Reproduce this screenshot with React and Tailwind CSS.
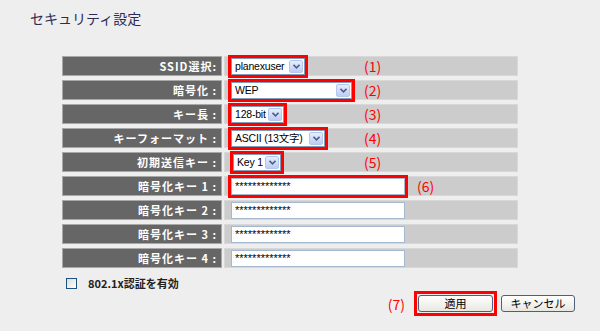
import React from 'react'

const jp = { fontFamily: '"Noto Sans CJK JP", "Liberation Sans", sans-serif' }
const ar = { fontFamily: '"Liberation Sans", "Noto Sans CJK JP", sans-serif' }

function Chevron() {
  return (
    <svg width="7" height="5" viewBox="0 0 7 5">
      <path d="M0.5 0.8 L3.5 3.8 L6.5 0.8" fill="none" stroke="#4d6185" strokeWidth="1.6" />
    </svg>
  )
}

function Select({ text, width }) {
  return (
    <div
      className="flex h-[17px] items-center border border-[#7f9db9] bg-white outline-[3px] outline-[#ff0000] outline-solid"
      style={{ width }}
    >
      <span className="flex-1 pl-[3px] text-[10.5px] leading-none tracking-[-0.2px] text-black whitespace-nowrap" style={ar}>
        {text}
      </span>
      <span className="mr-px flex h-[13px] w-[14px] shrink-0 items-center justify-center rounded-[2px] border border-[#b5c7ef] bg-gradient-to-b from-[#e6edfd] to-[#bccdf5]">
        <Chevron />
      </span>
    </div>
  )
}

function Input({ red }) {
  return (
    <div
      className={`flex h-[17px] w-[174px] items-center border border-[#a5b8ce] bg-white pl-[3px] text-[11px] leading-none text-black ${
        red ? 'outline-[3px] outline-[#ff0000] outline-solid' : ''
      }`}
      style={ar}
    >
      *************
    </div>
  )
}

function Note({ n }) {
  return (
    <span className="text-[14px] leading-none text-[#ff0000]" style={jp}>
      ({n})
    </span>
  )
}

const rows = [
  { label: 'SSID選択:', kind: 'select', text: 'planexuser', width: 74, note: 1 },
  { label: '暗号化 :', kind: 'select', text: 'WEP', width: 121, note: 2 },
  { label: 'キー長 :', kind: 'select', text: '128-bit', width: 53, note: 3 },
  { label: 'キーフォーマット :', kind: 'select', text: 'ASCII (13文字)', width: 94, note: 4 },
  { label: '初期送信キー :', kind: 'select', text: 'Key 1', width: 48, note: 5, indent: true },
  { label: '暗号化キー 1 :', kind: 'input', red: true, note: 6 },
  { label: '暗号化キー 2 :', kind: 'input' },
  { label: '暗号化キー 3 :', kind: 'input' },
  { label: '暗号化キー 4 :', kind: 'input' },
]

function Row({ row }) {
  return (
    <div className="flex h-[20px]">
      <div
        className="flex w-[160px] items-center justify-end border border-[#a8a8a8] bg-[#666666] pr-[4px] text-[11px] font-bold tracking-[1px] text-white"
        style={jp}
      >
        {row.label}
      </div>
      <div className="ml-[2px] flex w-[294px] items-center border border-[#d8d8d8] bg-[#cccccc] pl-[6px]">
        {row.kind === 'select' ? (
          <>
            <div className={`w-[133px] ${row.indent ? 'pl-[2px]' : ''}`}>
              <Select text={row.text} width={row.width} />
            </div>
            <Note n={row.note} />
          </>
        ) : (
          <>
            <Input red={row.red} />
            {row.note && (
              <span className="ml-[12px]">
                <Note n={row.note} />
              </span>
            )}
          </>
        )}
      </div>
    </div>
  )
}

export default function App() {
  return (
    <div className="relative h-[331px] w-[600px] overflow-hidden bg-[#eeeeee]">
      <h1 className="pl-[30px] pt-[9px] text-[14px] leading-[18px] text-[#2b2b55]" style={jp}>
        セキュリティ設定
      </h1>

      <div className="mt-[29px] flex flex-col gap-[4px] pl-[62px]">
        {rows.map((row, i) => (
          <Row key={i} row={row} />
        ))}
      </div>

      <div className="mt-[7px] flex h-[16px] items-center pl-[66px]">
        <span className="h-[11px] w-[11px] border border-[#1c5180] bg-gradient-to-br from-[#dcdcd7] to-white" />
        <span className="ml-[11px] text-[11px] font-bold leading-none text-[#222]" style={jp}>
          802.1x認証を有効
        </span>
      </div>

      <div className="flex items-center justify-end pr-[25px]">
        <span className="mr-[9px]">
          <Note n={7} />
        </span>
        <span className="border-[3px] border-[#ff0000] p-px">
          <button
            className="block h-[17px] w-[75px] rounded-[3px] border border-[#4e5e7c] bg-gradient-to-b from-white to-[#e8e8e2] text-[11px] leading-none text-black"
            style={jp}
          >
            適用
          </button>
        </span>
        <button
          className="ml-[4px] h-[17px] w-[74px] rounded-[3px] border border-[#4e5e7c] bg-gradient-to-b from-white to-[#e8e8e2] text-[11px] leading-none text-black"
          style={jp}
        >
          キャンセル
        </button>
      </div>
    </div>
  )
}
